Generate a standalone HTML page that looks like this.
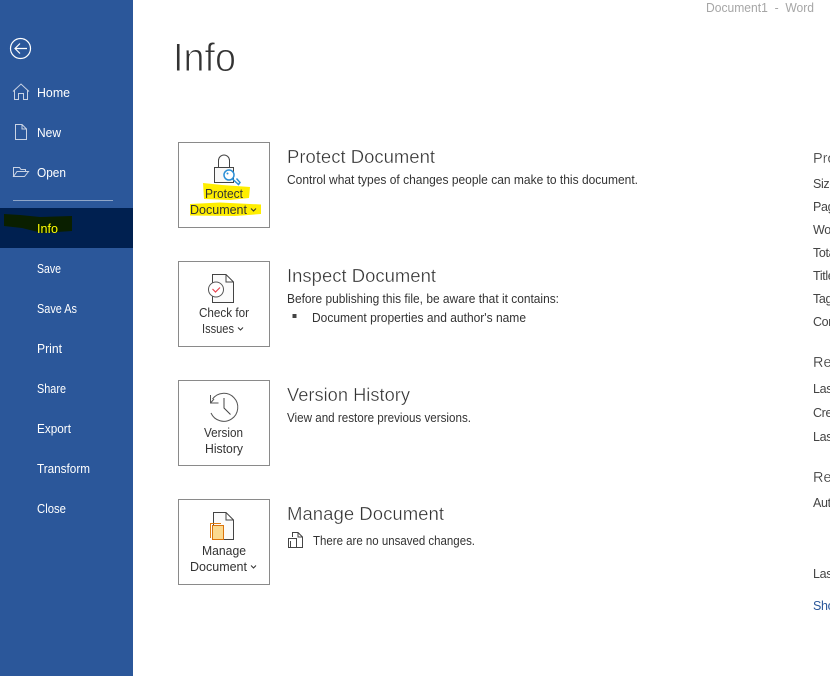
<!DOCTYPE html>
<html lang="en"><head><meta charset="utf-8"><title>Info</title>
<style>
html,body{margin:0;padding:0;background:#fff;overflow:hidden}
svg{display:block}
text{font-family:"Liberation Sans",sans-serif;white-space:pre}
.n{font-size:12.5px;fill:#fff}
.b{font-size:12.5px;fill:#333}
.h{font-size:18.5px;fill:#333;stroke:#fff;stroke-width:.35px}
.d{font-size:12.5px;fill:#333}
.r{font-size:12.5px;fill:#444;letter-spacing:-.35px}
.g{font-size:14.5px;fill:#333;stroke:#fff;stroke-width:.25px}
</style></head><body>
<svg xmlns="http://www.w3.org/2000/svg" width="830" height="676" viewBox="0 0 830 676">
<rect width="830" height="676" fill="#fff"/>
<rect width="133" height="676" fill="#2b579a"/>
<rect y="208" width="133" height="40" fill="#002050"/>
<path d="M4 214L20 215L40 217L72 216L72 231L42 233L22 228L4 226Z" fill="#0a1f00"/>
<rect x="13" y="200" width="100" height="1" fill="#8fa6c9"/>

<!-- back -->
<g fill="none" stroke="#fff" stroke-width="1.2">
<circle cx="20.500" cy="48.500" r="10"/>
<path d="M27 48.500H15M20 43.500L15 48.500L20 53.500"/>
</g>
<!-- home -->
<path d="M13 91.500L21 84L29 91.500M14.500 90V99.500H18.500V93.500H23.500V99.500H27.500V90" fill="none" stroke="#c9d3e4" stroke-width="1"/>
<!-- new -->
<path d="M15.500 124.500H22L26.500 129V139.500H15.500ZM22 124.500V129H26.500" fill="none" stroke="#c9d3e4" stroke-width="1"/>
<!-- open -->
<path d="M13.500 176.500V167.500H19.500L21 169.500H25.500V171.500M13.500 176.500H24.500L28.500 171.500H17L13.500 176.500Z" fill="none" stroke="#c9d3e4" stroke-width="1"/>

<text class="n" x="37" y="97" textLength="33" lengthAdjust="spacingAndGlyphs">Home</text>
<text class="n" x="37" y="137" textLength="24" lengthAdjust="spacingAndGlyphs">New</text>
<text class="n" x="37" y="177" textLength="29" lengthAdjust="spacingAndGlyphs">Open</text>
<text class="n" x="37" y="233" textLength="21" lengthAdjust="spacingAndGlyphs" style="fill:#ffff00">Info</text>
<text class="n" x="37" y="273" textLength="24" lengthAdjust="spacingAndGlyphs">Save</text>
<text class="n" x="37" y="313" textLength="40" lengthAdjust="spacingAndGlyphs">Save As</text>
<text class="n" x="37" y="353" textLength="25" lengthAdjust="spacingAndGlyphs">Print</text>
<text class="n" x="37" y="393" textLength="29" lengthAdjust="spacingAndGlyphs">Share</text>
<text class="n" x="37" y="433" textLength="34" lengthAdjust="spacingAndGlyphs">Export</text>
<text class="n" x="37" y="473" textLength="53" lengthAdjust="spacingAndGlyphs">Transform</text>
<text class="n" x="37" y="513" textLength="29" lengthAdjust="spacingAndGlyphs">Close</text>

<text x="706" y="12" font-size="12.500" fill="#a6a6a6" textLength="108" lengthAdjust="spacingAndGlyphs">Document1  -  Word</text>
<text x="173" y="71" font-size="40" fill="#333" stroke="#fff" stroke-width="1" textLength="63" lengthAdjust="spacingAndGlyphs">Info</text>

<!-- buttons -->
<g fill="#fff" stroke="#8a8a8a">
<rect x="178.500" y="142.500" width="91" height="85"/>
<rect x="178.500" y="261.500" width="91" height="85"/>
<rect x="178.500" y="380.500" width="91" height="85"/>
<rect x="178.500" y="499.500" width="91" height="85"/>
</g>

<!-- protect -->
<path d="M203 183L222 185L250 187L249 198L230 200L204 199Z" fill="#ffee00"/>
<path d="M190 204L220 202.500L261 204.500L261 214L235 216L190 215.500Z" fill="#ffee00"/>
<path d="M218.500 167V160.500a5.500 5.500 0 0 1 11 0V167" fill="none" stroke="#444"/>
<rect x="214.500" y="167.500" width="19" height="15" fill="#f8f8f8" stroke="#444"/>
<g fill="none" stroke="#2b8fd6" stroke-width="1.500">
<circle cx="229" cy="175" r="5" fill="#fff"/>
<path d="M232.500 179L238.500 184.500L240 182.500L236.500 178.500"/>
</g>
<circle cx="227.500" cy="173.500" r="1" fill="#2b8fd6"/>
<text class="b" x="205" y="198" textLength="38" lengthAdjust="spacingAndGlyphs">Protect</text>
<text class="b" x="190" y="214" textLength="57" lengthAdjust="spacingAndGlyphs">Document</text>
<path d="M251 208.500L253.500 211L256 208.500" fill="none" stroke="#333"/>

<!-- check -->
<path d="M212.500 274.500H226L233.500 282V302.500H212.500ZM226 274.500V282H233.500" fill="#fbfbfb" stroke="#444"/>
<circle cx="216" cy="289.500" r="7.500" fill="#fff" stroke="#555"/>
<path d="M212.500 289L215.500 292L220 287.500" fill="none" stroke="#e8434f" stroke-width="1.200"/>
<text class="b" x="199" y="317" textLength="50" lengthAdjust="spacingAndGlyphs">Check for</text>
<text class="b" x="202" y="333" textLength="32" lengthAdjust="spacingAndGlyphs">Issues</text>
<path d="M238 327.500L240.500 330L243 327.500" fill="none" stroke="#333"/>

<!-- history -->
<path d="M212.500 399A14 14 0 1 1 211 413" fill="none" stroke="#555"/>
<path d="M210.500 395V403H218.500" fill="none" stroke="#555"/>
<path d="M210.500 403L214 399" fill="none" stroke="#555"/>
<path d="M224 398V408L230.500 414.500" fill="none" stroke="#444"/>
<text class="b" x="204" y="437" textLength="39" lengthAdjust="spacingAndGlyphs">Version</text>
<text class="b" x="205" y="453" textLength="38" lengthAdjust="spacingAndGlyphs">History</text>

<!-- manage -->
<path d="M213.500 512.500H226L233.500 520V539.500H213.500ZM226 512.500V520H233.500" fill="#fbfbfb" stroke="#444"/>
<path d="M210.500 538V523.500H221" fill="none" stroke="#e07b10"/>
<rect x="212.500" y="525.500" width="11" height="14" fill="#fbd98f" stroke="#d9730d"/>
<text class="b" x="202" y="555" textLength="44" lengthAdjust="spacingAndGlyphs">Manage</text>
<text class="b" x="190" y="571" textLength="57" lengthAdjust="spacingAndGlyphs">Document</text>
<path d="M251 565.500L253.500 568L256 565.500" fill="none" stroke="#333"/>

<!-- descriptions -->
<text class="h" x="287" y="163" textLength="148" lengthAdjust="spacingAndGlyphs">Protect Document</text>
<text class="d" x="287" y="184" textLength="351" lengthAdjust="spacingAndGlyphs">Control what types of changes people can make to this document.</text>
<text class="h" x="287" y="282" textLength="149" lengthAdjust="spacingAndGlyphs">Inspect Document</text>
<text class="d" x="287" y="303" textLength="272" lengthAdjust="spacingAndGlyphs">Before publishing this file, be aware that it contains:</text>
<rect x="292.500" y="314" width="4" height="4" fill="#444"/>
<text class="d" x="312" y="322" textLength="214" lengthAdjust="spacingAndGlyphs">Document properties and author's name</text>
<text class="h" x="287" y="401" textLength="123" lengthAdjust="spacingAndGlyphs">Version History</text>
<text class="d" x="287" y="422" textLength="184" lengthAdjust="spacingAndGlyphs">View and restore previous versions.</text>
<text class="h" x="287" y="520" textLength="157" lengthAdjust="spacingAndGlyphs">Manage Document</text>
<path d="M292.500 537V532.500H298L302.500 537V547.500H297M298 532.500V537H302.500M288.500 538.500H296.500V547.500H288.500ZM290.500 541V547" fill="none" stroke="#444"/>
<text class="d" x="313" y="545" textLength="162" lengthAdjust="spacingAndGlyphs">There are no unsaved changes.</text>

<!-- right column -->
<g>
<text class="g" x="813" y="163">Properties</text>
<text class="r" x="813" y="188">Size</text>
<text class="r" x="813" y="211">Pages</text>
<text class="r" x="813" y="234">Words</text>
<text class="r" x="813" y="257">Total</text>
<text class="r" x="813" y="280">Title</text>
<text class="r" x="813" y="303">Tags</text>
<text class="r" x="813" y="326">Comments</text>
<text class="g" x="813" y="367">Related</text>
<text class="r" x="813" y="393">Last</text>
<text class="r" x="813" y="417">Created</text>
<text class="r" x="813" y="441">Last</text>
<text class="g" x="813" y="482">Related</text>
<text class="r" x="813" y="507">Author</text>
<text class="r" x="813" y="578">Last</text>
<text class="r" x="813" y="610" style="fill:#2b579a">Show</text>
</g>
</svg>
</body></html>
